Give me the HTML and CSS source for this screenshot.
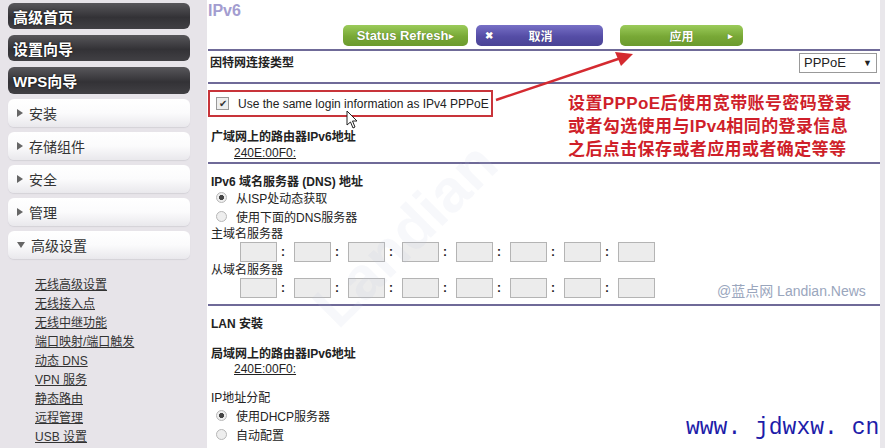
FILE: index.html
```html
<!DOCTYPE html>
<html lang="zh-CN">
<head>
	<meta charset="UTF-8">
	<title>IPv6</title>
	<link rel="stylesheet" href="styles.css">
</head>
<body>
	<div class="page">
		<!-- 左侧菜单 -->
		<div class="side">
			<a class="nav-dark" href="#">高级首页</a>
			<a class="nav-dark" href="#">设置向导</a>
			<a class="nav-dark" href="#">WPS向导</a>
			<a class="nav-light" href="#"><i class="tri"></i>安装</a>
			<a class="nav-light" href="#"><i class="tri"></i>存储组件</a>
			<a class="nav-light" href="#"><i class="tri"></i>安全</a>
			<a class="nav-light" href="#"><i class="tri"></i>管理</a>
			<a class="nav-light open" href="#"><i class="tri down"></i>高级设置</a>
			<ul class="sub">
				<li><a href="#">无线高级设置</a></li>
				<li><a href="#">无线接入点</a></li>
				<li><a href="#">无线中继功能</a></li>
				<li><a href="#">端口映射/端口触发</a></li>
				<li><a href="#">动态 DNS</a></li>
				<li><a href="#">VPN 服务</a></li>
				<li><a href="#">静态路由</a></li>
				<li><a href="#">远程管理</a></li>
				<li><a href="#">USB 设置</a></li>
			</ul>
		</div>

		<!-- 主内容 -->
		<div class="main">
			<div class="title">IPv6</div>
			<div class="btnbar">
				<a class="btn green refresh" href="#">Status Refresh<span class="arr">&#9656;</span></a>
				<a class="btn purple cancel" href="#"><span class="x">&#10006;</span>取消</a>
				<a class="btn green apply" href="#">应用<span class="arr">&#9656;</span></a>
			</div>
			<div class="line"></div>

			<div class="conn">
				<b>因特网连接类型</b>
				<div class="select">PPPoE<span>&#9660;</span></div>
			</div>
			<div class="line"></div>

			<div class="same">
				<span class="chk">&#10004;</span>Use the same login information as IPv4 PPPoE
			</div>
			<div class="label first">广域网上的路由器IPv6地址</div>
			<div class="addr"><u>240E:00F0:</u></div>
			<div class="line"></div>

			<div class="label dns">IPv6 域名服务器 (DNS) 地址</div>
			<div class="radio first"><span class="dot on"></span>从ISP处动态获取</div>
			<div class="radio"><span class="dot"></span>使用下面的DNS服务器</div>
			<div class="plain">主域名服务器</div>
			<div class="ipbox">
				<span></span>:<span></span>:<span></span>:<span></span>:<span></span>:<span></span>:<span></span>:<span></span>
			</div>
			<div class="plain">从域名服务器</div>
			<div class="ipbox">
				<span></span>:<span></span>:<span></span>:<span></span>:<span></span>:<span></span>:<span></span>:<span></span>
			</div>
			<div class="line gap"></div>

			<div class="label lan">LAN 安裝</div>
			<div class="label lan-addr">局域网上的路由器IPv6地址</div>
			<div class="addr tight"><u>240E:00F0:</u></div>
			<div class="plain assign">IP地址分配</div>
			<div class="radio"><span class="dot on"></span>使用DHCP服务器</div>
			<div class="radio"><span class="dot"></span>自动配置</div>
		</div>
		<div class="edge"></div>

		<!-- 叠加的标注 -->
		<div class="note">设置PPPoE后使用宽带账号密码登录<br>或者勾选使用与IPv4相同的登录信息<br>之后点击保存或者应用或者确定等等</div>
		<svg class="arrow" width="150" height="60" viewBox="0 0 150 60">
			<line x1="3" y1="55" x2="128" y2="13" stroke="#d42a30" stroke-width="2.5"/>
			<polygon points="140,9 122,7 128,21" fill="#d42a30"/>
		</svg>
		<svg class="cursor" width="14" height="20" viewBox="0 0 14 20">
			<path d="M1 1 L1 15 L4.5 12 L7 18 L9 17 L6.5 11 L11 11 Z" fill="#fff" stroke="#222" stroke-width="1"/>
		</svg>
		<div class="faint">Landian</div>
		<div class="mark">@蓝点网 Landian.News</div>
		<div class="site">www. jdwxw. cn</div>
	</div>
</body>
</html>
```

FILE: styles.css
```css
body {
	margin: 0;
	padding: 0;
	font-family: "Liberation Sans", "Noto Sans CJK SC", sans-serif;
	font-size: 12px;
	color: #222;
}
a {
	text-decoration: none;
}
ul {
	margin: 0;
	padding: 0;
	list-style-type: none;
}

.page {
	position: relative;
	display: flex;
	width: 885px;
	height: 448px;
	overflow: hidden;
	background-color: #e7e4e9;
}

/*左侧菜单*/
.side {
	width: 182px;
	padding: 3px 17px 0 8px;
	flex: none;
}
.nav-dark {
	display: flex;
	align-items: center;
	height: 26px;
	margin-bottom: 6px;
	padding-left: 5px;
	border-radius: 6px;
	background: linear-gradient(#58575b, #333236 55%, #414044);
	color: #fff;
	font-size: 15px;
	font-weight: bold;
	text-shadow: 0 0 2px #000;
}
.nav-dark:nth-child(3) {
	height: 27px;
	margin-bottom: 5px;
}
.nav-light {
	display: flex;
	align-items: center;
	height: 28px;
	margin-bottom: 5px;
	padding-left: 9px;
	border-radius: 6px;
	background: linear-gradient(#fff, #fbfbfc 50%, #e9e8ec);
	box-shadow: 0 1px 1px #d4d2d8;
	color: #333;
	font-size: 14px;
}
.tri {
	width: 0;
	height: 0;
	margin-right: 6px;
	border-left: 6px solid #666;
	border-top: 4px solid transparent;
	border-bottom: 4px solid transparent;
}
.tri.down {
	border-left: 4px solid transparent;
	border-right: 4px solid transparent;
	border-top: 6px solid #666;
	border-bottom: 0;
	margin-right: 6px;
}
.sub {
	margin-top: 17px;
	padding-left: 27px;
}
.sub li {
	line-height: 19px;
}
.sub a {
	color: #333;
	font-size: 12px;
	text-decoration: underline;
}

/*主内容*/
.main {
	width: 672px;
	padding-left: 1px;
	background-color: #fff;
}
.edge {
	width: 5px;
	background-color: #e9e7eb;
}
.title {
	height: 22px;
	line-height: 22px;
	color: #a39dd0;
	font-size: 16px;
	font-weight: bold;
}
.btnbar {
	display: flex;
	height: 27px;
	padding: 3px 0 0 135px;
	box-sizing: border-box;
}
.btn {
	position: relative;
	display: flex;
	align-items: center;
	justify-content: center;
	height: 21px;
	border-radius: 5px;
	color: #fff;
	font-size: 12px;
	font-weight: bold;
	text-shadow: 0 0 1px rgba(0,0,0,0.4);
}
.green {
	background: linear-gradient(#9bcb5a, #78a836 55%, #6b9a2e);
}
.purple {
	background: linear-gradient(#7770c6, #554da6 55%, #4a4395);
}
.refresh {
	width: 125px;
	font-size: 13px;
}
.refresh .arr {
	font-size: 9px;
	margin-left: 1px;
}
.cancel {
	width: 127px;
	margin-left: 8px;
	padding-left: 2px;
	box-sizing: border-box;
}
.cancel .x {
	position: absolute;
	left: 9px;
	font-size: 10px;
}
.apply {
	width: 123px;
	margin-left: 17px;
}
.apply .arr {
	position: absolute;
	right: 10px;
	font-size: 9px;
}
.line {
	height: 2px;
	background-color: #6f6a98;
}
.line.gap {
	margin-top: 6px;
}

.conn {
	display: flex;
	justify-content: space-between;
	height: 31px;
	padding-top: 2px;
	box-sizing: border-box;
	line-height: 20px;
}
.conn b {
	padding-left: 2px;
}
.select {
	display: flex;
	justify-content: space-between;
	width: 68px;
	height: 18px;
	line-height: 18px;
	margin-right: 3px;
	padding: 0 4px;
	border: 1px solid #999;
	font-size: 13px;
}
.select span {
	font-size: 9px;
}

.same {
	display: flex;
	align-items: center;
	width: 281px;
	height: 23px;
	margin-top: 6px;
	border: 2px solid #c8343a;
	color: #222;
}
.chk {
	display: inline-flex;
	align-items: center;
	justify-content: center;
	width: 11px;
	height: 11px;
	margin: 0 9px 0 6px;
	border: 1px solid #999;
	background-color: #eee;
	font-size: 10px;
	color: #333;
}
.label {
	padding-left: 3px;
	line-height: 16px;
	font-weight: bold;
}
.label.first {
	margin-top: 12px;
}
.label.dns {
	margin-top: 10px;
}
.label.lan {
	margin-top: 10px;
}
.label.lan-addr {
	margin-top: 14px;
}
.addr {
	padding-left: 26px;
	line-height: 17px;
	color: #222;
}
.addr.tight {
	line-height: 14px;
}
.radio {
	display: flex;
	align-items: center;
	height: 19px;
	padding-left: 8px;
	font-size: 12px;
}
.radio.first {
	margin-top: -2px;
}
.dot {
	width: 9px;
	height: 9px;
	margin-right: 9px;
	border: 1px solid #b8b8b8;
	border-radius: 50%;
	background-color: #eee;
}
.dot.on {
	background: radial-gradient(#444 35%, #eee 45%);
}
.plain {
	padding-left: 3px;
	line-height: 16px;
}
.plain.assign {
	margin-top: 14px;
}
.ipbox {
	display: flex;
	align-items: center;
	height: 20px;
	padding-left: 32px;
	font-weight: bold;
}
.ipbox span {
	width: 35px;
	height: 18px;
	margin-right: 4px;
	border: 1px solid #b4b4b4;
	background-color: #ececec;
}
.ipbox span + span {
	margin-left: 9px;
}

/*叠加的标注和水印*/
.note {
	position: absolute;
	left: 568px;
	top: 92px;
	line-height: 23px;
	color: #cf1f2a;
	font-size: 17px;
	font-weight: bold;
	letter-spacing: 0.4px;
}
.arrow {
	position: absolute;
	left: 493px;
	top: 45px;
}
.cursor {
	position: absolute;
	left: 346px;
	top: 110px;
}
.faint {
	position: absolute;
	left: 290px;
	top: 200px;
	color: rgba(190,200,225,0.12);
	font-size: 60px;
	font-weight: bold;
	transform: rotate(-45deg);
}
.mark {
	position: absolute;
	left: 717px;
	top: 280px;
	color: #9aa6bd;
	font-size: 14px;
}
.site {
	position: absolute;
	left: 686px;
	top: 415px;
	color: #1d1ca9;
	font-family: "Liberation Mono", monospace;
	font-size: 23px;
}
```
